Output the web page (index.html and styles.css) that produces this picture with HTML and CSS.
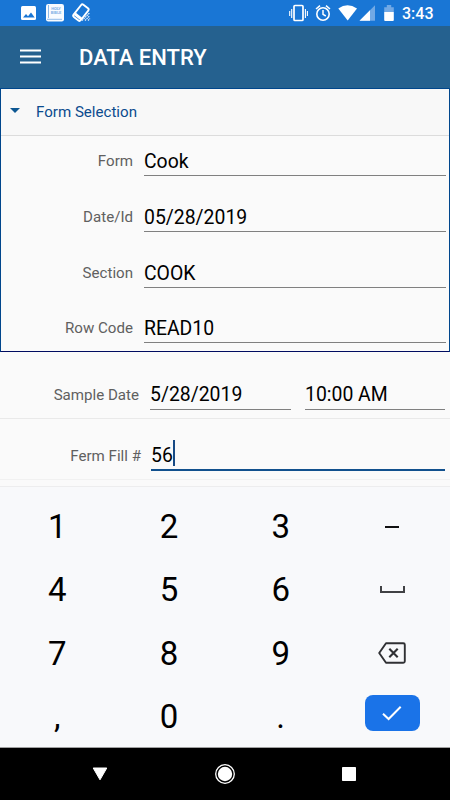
FILE: index.html
```html
<!DOCTYPE html>
<html lang="en">
<head>
    <meta charset="UTF-8">
    <meta name="viewport" content="width=device-width, initial-scale=1.0">
    <title>Data Entry</title>
    <link rel="stylesheet" href="styles.css">
</head>
<body>
    <div class="status-bar">
        <svg class="status-left" width="80" height="26" viewBox="0 0 80 26">
            <!-- picture -->
            <rect x="6" y="6" width="15" height="14" rx="1.5" fill="#fff"/>
            <path d="M8 17.5l3-3.6 2 2.3 3-3.600 3.700 4.900z" fill="#1976d5"/>
            <!-- book -->
            <rect x="31" y="4" width="18" height="17.500" rx="2.200" fill="#f8fbff"/>
            <path d="M33.500 5v13M32 19.300h15" stroke="#8fbbea" stroke-width="1" fill="none"/>
            <text x="41" y="9.800" class="book-text">HOLY</text>
            <text x="41" y="13.800" class="book-text">BIBLE</text>
            <!-- tilted phone -->
            <g transform="rotate(38 66 13)" fill="none" stroke="#fff" stroke-width="1.900">
                <rect x="61.200" y="5" width="9" height="15.500" rx="1.600"/>
                <path d="M61.500 17.500h9" stroke-width="3"/>
            </g>
            <path d="M67 20.500l7.500-7.500M70 20.500l4.500-4.500M73 20.500l2-2" stroke="#e6f0fb" stroke-width="1.200" stroke-dasharray="1.600 .6"/>
        </svg>
        <svg class="status-right" width="112" height="26" viewBox="0 0 112 26">
            <!-- vibrate -->
            <rect x="6" y="5.500" width="9" height="15" rx="1" fill="none" stroke="#fff" stroke-width="1.700"/>
            <path d="M1.700 11v5M3.700 9v9M17.400 9v9M19.400 11v5" stroke="#fff" stroke-width="1.100"/>
            <!-- alarm -->
            <circle cx="35" cy="14" r="6.200" fill="none" stroke="#fff" stroke-width="1.600"/>
            <path d="M35 10v4.300l2.800 1.700M28 9l4-3.400M42 9l-4-3.400" fill="none" stroke="#fff" stroke-width="1.500"/>
            <!-- wifi -->
            <path d="M50.300 8.600Q59.500 2 69 8.600L59.700 20.500z" fill="#fff"/>
            <!-- signal -->
            <path d="M71.500 20.800L87 5.300v15.500z" fill="#72a9e5"/>
            <path d="M71.500 20.800L82 10.300v10.500z" fill="#fff"/>
            <!-- battery -->
            <path d="M96.200 12V7.200h2.600V5h4.400v2.200h2.600V12z" fill="#72a9e5"/>
            <path d="M96.200 12h9.600v8q0 1-1 1h-7.600q-1 0-1-1z" fill="#fff"/>
        </svg>
        <span class="clock">3:43</span>
    </div>

    <header class="app-bar">
        <svg class="menu-icon" width="21" height="16" viewBox="0 0 21 16">
            <path d="M0 1.500h21M0 7.500h21M0 13.500h21" stroke="#fff" stroke-width="2.200"/>
        </svg>
        <h1>DATA ENTRY</h1>
    </header>

    <section class="selection">
        <div class="selection-header">
            <span class="caret"></span>
            <h2>Form Selection</h2>
        </div>
        <div class="field">
            <label>Form</label>
            <div class="value">Cook</div>
        </div>
        <div class="field">
            <label>Date/Id</label>
            <div class="value">05/28/2019</div>
        </div>
        <div class="field">
            <label>Section</label>
            <div class="value">COOK</div>
        </div>
        <div class="field">
            <label>Row Code</label>
            <div class="value">READ10</div>
        </div>
    </section>

    <section class="entries">
        <div class="entry sample">
            <label>Sample Date</label>
            <div class="value date">5/28/2019</div>
            <div class="value time">10:00 AM</div>
        </div>
        <div class="entry fill">
            <label>Ferm Fill #</label>
            <div class="value focused">56<span class="cursor"></span></div>
        </div>
    </section>

    <div class="keypad">
        <div class="key">1</div>
        <div class="key">2</div>
        <div class="key">3</div>
        <div class="key"><span class="minus"></span></div>
        <div class="key">4</div>
        <div class="key">5</div>
        <div class="key">6</div>
        <div class="key"><span class="space"></span></div>
        <div class="key">7</div>
        <div class="key">8</div>
        <div class="key">9</div>
        <div class="key">
            <svg width="28" height="22" viewBox="0 0 28 22" fill="none" stroke="#303134" stroke-width="1.900">
                <path d="M8 1.200h17.300q1.500 0 1.500 1.500v16.600q0 1.500-1.500 1.500H8L1.200 11z" stroke-linejoin="round"/>
                <path d="M11.300 6.800l8.400 8.400M19.700 6.800l-8.400 8.400" stroke-width="2.100"/>
            </svg>
        </div>
        <div class="key">,</div>
        <div class="key">0</div>
        <div class="key">.</div>
        <div class="key">
            <div class="enter">
                <svg width="20" height="16" viewBox="0 0 20 16">
                    <path d="M1 8.700l5.600 5.300L18.700 1.800" fill="none" stroke="#fff" stroke-width="2"/>
                </svg>
            </div>
        </div>
    </div>

    <nav class="nav-bar">
        <svg width="16" height="14" viewBox="0 0 16 14">
            <path d="M1.200 1h13.600L8 12.800z" fill="#fff" stroke="#fff" stroke-linejoin="round"/>
        </svg>
        <svg width="20" height="20" viewBox="0 0 20 20">
            <circle cx="10" cy="10" r="9.300" fill="none" stroke="#fff" stroke-width="1.300"/>
            <circle cx="10" cy="10" r="7.200" fill="#fff"/>
        </svg>
        <svg width="14" height="14" viewBox="0 0 14 14">
            <rect width="14" height="14" rx=".7" fill="#fff"/>
        </svg>
    </nav>
</body>
</html>
```
FILE: styles.css
```css
* {
    margin: 0;
    padding: 0;
    box-sizing: border-box;
}

body {
    width: 450px;
    height: 800px;
    display: flex;
    flex-direction: column;
    overflow: hidden;
    font-family: Roboto, sans-serif;
    background-color: #fafafa;
    color: #000;
}

.status-bar {
    height: 26px;
    display: flex;
    align-items: center;
    padding: 0 17px 0 15px;
    background-color: #1976d5;
    color: #fff;
}

.status-right {
    margin-left: auto;
}

.book-text {
    font-size: 4px;
    font-weight: bold;
    text-anchor: middle;
    fill: #7fb0e6;
}

.clock {
    width: 31px;
    margin-left: 2px;
    padding-top: 1px;
    font-size: 16px;
    font-weight: 500;
    white-space: nowrap;
}

.app-bar {
    height: 62px;
    display: flex;
    align-items: center;
    padding: 1px 20px 0;
    background-color: #25618f;
    color: #fff;
}

.menu-icon {
    margin-top: -2px;
}

.app-bar h1 {
    margin-left: 38px;
    font-size: 22px;
    font-weight: 500;
}

.selection {
    height: 264px;
    border: 1px solid #00468c;
    border-bottom-color: #000c60;
}

.selection-header {
    height: 47px;
    display: flex;
    align-items: center;
    padding-left: 9px;
    background-color: #f8f8f8;
    border-bottom: 1px solid #dcdcdc;
}

.caret {
    border: 5px solid transparent;
    border-top-color: #0d5792;
    border-bottom: 0;
    margin-top: -3px;
}

.selection-header h2 {
    margin-left: 16px;
    font-size: 15.1px;
    font-weight: 400;
    color: #0b4b8e;
}

label {
    font-size: 15.1px;
    text-align: right;
    color: #606060;
}

.value {
    font-size: 19.4px;
    border-bottom: 1px solid #808080;
}

.field {
    height: 56px;
    display: flex;
    align-items: flex-end;
    padding-right: 3px;
}

.field:nth-child(2) {
    height: 40px;
}

.field label {
    width: 132px;
    margin-right: 11px;
    padding-bottom: 6px;
}

.field .value {
    flex: 1;
    height: 30px;
    line-height: 31px;
}

.field:last-child {
    height: 55px;
}

.entries {
    height: 134px;
}

.entry {
    display: flex;
    align-items: flex-end;
    border-bottom: 1px solid #e9e9e9;
}

.sample {
    height: 67px;
    padding-bottom: 8px;
}

.fill {
    height: 61px;
    padding-bottom: 8px;
    border-bottom-color: #f1f1f1;
}

.entry label {
    width: 139px;
    padding-bottom: 6px;
}

.entry .value {
    height: 31px;
    line-height: 31px;
}

.date {
    width: 141px;
    margin-left: 11px;
}

.time {
    width: 140px;
    margin-left: 14px;
}

.entry.fill label {
    width: 141px;
}

.entry .focused {
    display: flex;
    width: 294px;
    margin-left: 10px;
    border-bottom: 2px solid #11508d;
}

.cursor {
    width: 2px;
    height: 26px;
    background-color: #174a85;
}

.keypad {
    height: 261px;
    display: grid;
    grid-template-columns: repeat(4, 111.7px);
    grid-template-rows: repeat(4, 63.3px);
    padding: 8px 1px 0;
    background-color: #f8f9fb;
    border-top: 1px solid #ededee;
    overflow: hidden;
}

.key {
    display: flex;
    align-items: center;
    justify-content: center;
    padding-left: 1px;
    font-size: 33px;
}

.minus {
    width: 14px;
    height: 2px;
    background-color: #111;
}

.space {
    width: 25px;
    height: 7px;
    border: 2px solid #404144;
    border-top: 0;
}

.enter {
    width: 55px;
    height: 36px;
    display: flex;
    align-items: center;
    justify-content: center;
    margin-bottom: 8px;
    border-radius: 8px;
    background-color: #1a73e8;
}

.nav-bar {
    height: 53px;
    display: flex;
    align-items: center;
    justify-content: space-between;
    padding: 0 94px 0 92px;
    background-color: #000;
    border-top: 1px solid #a0a0a0;
}
```
